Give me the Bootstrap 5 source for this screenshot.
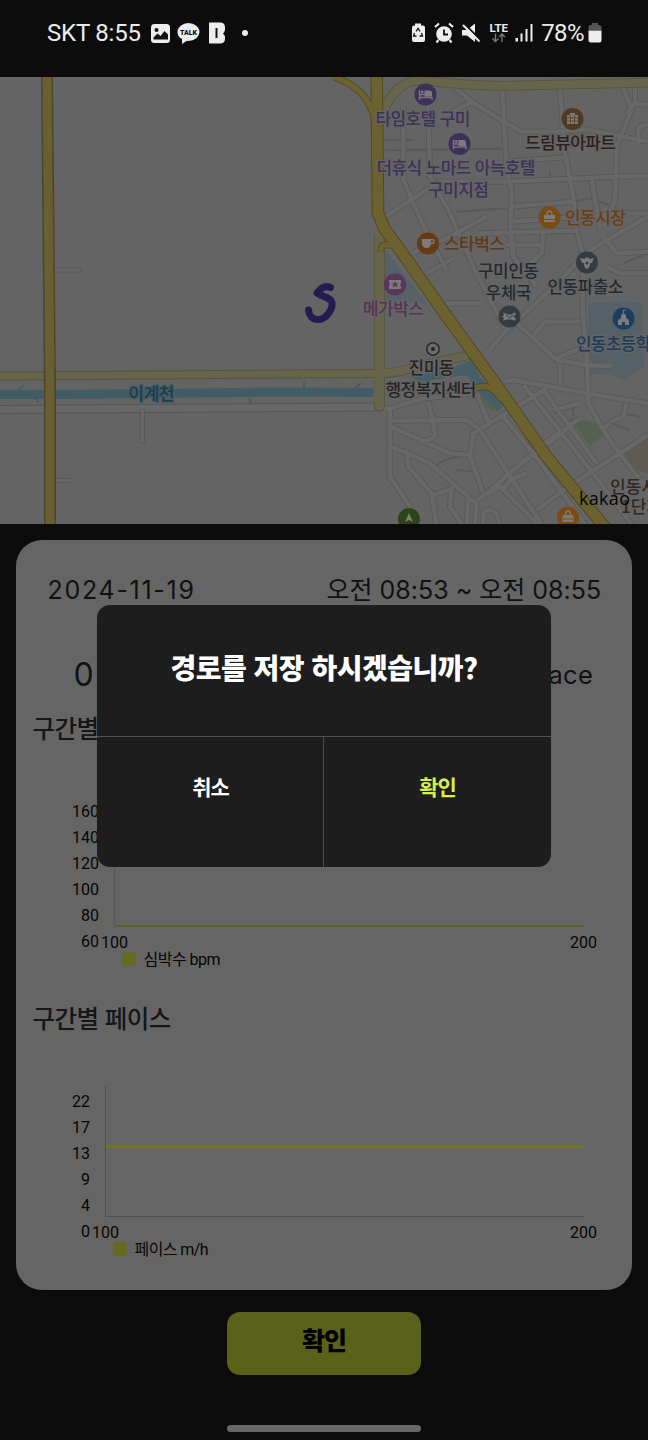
<!DOCTYPE html>
<html lang="ko">
<head>
<meta charset="utf-8">
<meta name="viewport" content="width=device-width, initial-scale=1">
<title>경로 저장</title>
<link rel="stylesheet" href="https://cdn.jsdelivr.net/npm/bootstrap@5.3.0/dist/css/bootstrap.min.css">
<style>
  body { background:#0c0c0c; font-family:"Noto Sans CJK KR",sans-serif; color:#111; }
  .screen { width:648px; height:1440px; }
  .statusbar { height:77px; padding:0 46px 11px 47px; color:#ededed; font:24px/1 Roboto,sans-serif; }
  .statusbar svg { display:block; flex:none; }
  .carrier { width:95px; letter-spacing:-.2px; white-space:nowrap; }
  .charge { letter-spacing:-.6px; }
  .mapview { height:447px; }
  .mapview svg, .plot { display:block; }
  .record { width:616.5px; height:750px; margin:15.5px 0 0 15.6px; background:#656565; border-radius:26px; }
  .when { height:50px; margin:25px 31px 0 32px; font:25px/50px Inter,"Noto Sans CJK KR",sans-serif; }
  .date-text { letter-spacing:1.7px; }
  .time-text { letter-spacing:0; }
  .stats { height:60px; margin:30px 39px 0 58px; line-height:60px; font-family:Inter,sans-serif; }
  .stat-num { font-size:32px; } .stat-unit { font-size:25.5px; letter-spacing:.3px; }
  .section-title { font-size:24.5px; line-height:40px; height:40px; padding-top:3px; padding-left:17px; color:#141618; letter-spacing:-.55px; font-weight:500; }
  .section-title.mt-2 { padding-top:5px; }
  .btn-save, .btn-save:hover { width:194px; height:63px; margin-top:22px; background:#5a611a; color:#000; border:0; border-radius:13px; font-size:25px; font-weight:900; line-height:1; padding:0 0 8px; letter-spacing:-1px; }
  .home-handle { width:194px; height:7px; margin-top:50px; border-radius:4px; background:#666; }
  .ask { left:97px; top:605px; width:454px; height:262px; border-radius:13px; background:#1d1d1d; overflow:hidden; }
  .ask-title { height:132px; border-bottom:1.5px solid #555; color:#fff; font-weight:900; font-size:28px; line-height:124px; letter-spacing:-.5px; }
  .ask-btn, .ask-btn:hover { height:130px; border:0; border-radius:0; background:none; color:#fff; font-size:21px; font-weight:700; line-height:1; padding:0 0 31px; letter-spacing:-1px; }
  .ask-btn:first-child { box-shadow:inset -1px 0 #4a4a4a; }
  .ask-btn + .ask-btn { color:#d9ee4e; }
  .tick { font:16px Roboto,"Noto Sans CJK KR",sans-serif; fill:#050505; }
  .place { font:500 17px "Noto Sans CJK KR",sans-serif; paint-order:stroke; stroke:#656565; stroke-width:2.5px; stroke-linejoin:round; text-anchor:middle; }
</style>
</head>
<body>
<div class="screen position-relative overflow-hidden d-flex flex-column">
  <header class="statusbar d-flex justify-content-between align-items-center">
    <div class="d-flex align-items-center">
      <span class="carrier">SKT 8:55</span>
      <svg class="ms-2" width="102" height="24" viewBox="150 21 102 24" fill="#ededed">
        <rect x="151" y="24" width="19" height="19" rx="3.5"/>
        <circle cx="156.5" cy="30" r="2" fill="#111"/><path d="M153.500 39.500v-2l4-4 3 2.500 4-5 3.500 3.500v5z" fill="#111"/>
        <ellipse cx="188.500" cy="32" rx="11" ry="9"/><path d="M182 38v6l6-4z"/>
        <text x="188.500" y="35" font-family="Roboto" font-size="8" font-weight="900" fill="#111" text-anchor="middle" textLength="17" lengthAdjust="spacingAndGlyphs">TALK</text>
        <path d="M209 22.500h11q5 0 5 5v2q0 2-2 4 2 2 2 4v1q0 5-5 5h-11z"/><path d="M215.500 28h2v10h-2z" fill="#111"/>
        <circle cx="245" cy="33" r="3"/>
      </svg>
    </div>
    <div class="d-flex align-items-center">
      <svg width="131" height="24" viewBox="410 21 131 24" fill="#ededed">
        <path d="M415 23.500h6v2h2q2 0 2 2v12.500q0 2-2 2h-9q-2 0-2-2v-12.500q0-2 2-2h1z"/>
        <path d="M416 31.500l2-3 2 3M421.500 33l1 3h-3M416.500 36h-3l1-3" fill="none" stroke="#111" stroke-width="1.300"/>
        <circle cx="444" cy="34" r="7.800"/><path d="M435 27l4-3.500M453 27l-4-3.500M438.500 40l-2 2.500M449.500 40l2 2.500" stroke="#ededed" stroke-width="2.200"/><path d="M444 29.500v5h4" fill="none" stroke="#111" stroke-width="1.800"/>
        <path d="M462 30h5l8-6.500v18.500l-8-6.500h-5z"/><path d="M465 24.500l15 15" stroke="#0c0c0c" stroke-width="2"/><path d="M463 25l16.500 16.500" stroke="#ededed" stroke-width="2.200"/>
        <text x="489.500" y="32" font-family="Roboto" font-size="11" font-weight="700" textLength="18.500" lengthAdjust="spacingAndGlyphs">LTE</text>
        <path d="M495.500 33.500v8M492.500 38.500l3 3 3-3M502 42v-8M499 37l3-3 3 3" fill="none" stroke="#777" stroke-width="1.400"/>
        <path d="M515.500 38h2.500v3.500h-2.500zM520.500 33.500h2v8h-2zM525.500 29h2v12.500h-2zM530.500 24h2v17.500h-2z"/>
      </svg>
      <span class="charge">78%</span>
      <svg class="ms-1" width="14" height="20" viewBox="0 0 14 20"><path d="M4 0h6v2h1q2.500 0 2.500 2.500V7h-13V4.500Q.5 2 3 2h1z" fill="#555"/><path d="M.5 7.500h13V17q0 2.500-2.500 2.500H3Q.5 19.500.5 17z" fill="#ededed"/></svg>
    </div>
  </header>

  <section class="mapview">
    <svg width="648" height="447" viewBox="0 77 648 447">
      <defs>
        <path id="lanes" d="M330 40L395 95L500 160L545 185L650 185L740 178L924 215M395 95L320 135M487 60L500 300L515 360L512 480L520 560L590 650M660 60L675 250L700 380L712 490L730 560L728 720L740 860L745 1000L790 1080L830 1140L924 1260M850 55L875 120L830 230L825 390L790 470M885 50V100L924 105M885 100L860 130M895 225V185Q895 165 924 165M265 110L270 320L330 430L400 590L495 775M190 110V330L260 490L320 600M135 440L260 360L300 335L500 335L830 320L924 318M500 275L670 262M515 410L700 395M515 455L860 430L924 430M420 490L710 482M755 330L780 475M215 550L330 500L440 440M260 610L340 565M440 850L495 785L620 670L750 540L924 440M610 490L605 550L560 590M500 525H610M790 500L830 550L924 545M800 590L840 610H924M318 700H420M510 740L650 870L740 885L815 888M580 795L615 755H720M650 865L720 835M660 885L662 940M490 935L520 930L740 970L924 1000M-700 1013L0 1010L150 1015L250 985L410 970M150 1020V1220L210 1310M155 1052L380 1050L420 1080L550 1280L610 1370M265 995L278 1050L285 1095Q275 1115 240 1115M155 1070L330 1150L395 1155M155 1130L270 1180L385 1280L380 1370M200 1140L205 1190L275 1270L290 1370M620 955L400 1090L390 1160L430 1270M550 945L610 1020L790 1250L880 1370M610 960L770 1180M490 1040L580 1150L690 1300L740 1370M440 1270L600 1130L720 1045M520 1200L690 1070M590 1320L700 1240L924 1095M410 1290L480 1250L600 1370M490 1260L510 1230L560 1210M405 1370L410 1300L380 1280M335 1250L330 1310L370 1370M280 1275L340 1255M430 1370V1330Q445 1310 470 1330L480 1370M410 970L445 1055M790 1075L812 1060M640 1020L720 1000M860 1000L850 1040L810 1055"/>
        <g id="bed"><path d="M-6 -4.500V5.500M-6 3H6.500V5.500M-6 0H6" fill="none" stroke="#77737f" stroke-width="1.500"/><circle cx="-3.300" cy="-2.500" r="1.400"/><path d="M-1-4h5q2.500 0 2.500 2.500V2H-1z"/></g>
      </defs>
      <rect y="77" width="648" height="447" fill="#646464"/>
      <g transform="translate(340 70) scale(.33333)" fill="none" stroke-linejoin="round">
        <path d="M135 540L260 700L135 690z" fill="#566067"/>
        <path d="M745 700L860 695L905 700L912 890L850 930L800 910L745 915z" fill="#566067"/>
        <path d="M685 1040L765 1060L790 1095L750 1128z" fill="#53604e"/>
        <path d="M850 1145L924 1090V1210L885 1200z" fill="#5e5953"/>
        <path d="M210 920L345 890L395 870L420 920L495 1005L470 1025L410 960L380 915L240 935z" fill="#465e68"/>
        <path d="M400 965L465 1022" stroke="#59624c" stroke-width="14"/>
        <path d="M130 210H220M135 241L490 236M350 425L500 415M700 395L750 385L820 410M290 1185Q320 1160 370 1160M345 1200L405 1205M700 1010V1040M815 1060L870 1080M850 1030L900 1040M630 305V320M850 580L924 550" stroke="#595959" stroke-width="6"/>
        <use href="#lanes" stroke="#585858" stroke-width="18"/>
        <use href="#lanes" stroke="#686868" stroke-width="13"/>
        <path d="M118 500V1008" stroke="#56543b" stroke-width="33" stroke-linecap="round"/>
        <path d="M130 125C155 65 190 25 260 32Q420 52 560 46L924 38M130 911Q190 905 240 888L410 850" stroke="#56543b" stroke-width="29"/>
        <path d="M118 480V1008" stroke="#67654b" stroke-width="28" stroke-linecap="round"/>
        <path d="M130 125C155 65 190 25 260 32Q420 52 560 46L924 38M120 911Q190 905 240 888L410 850" stroke="#67654b" stroke-width="24"/>
      </g>
      <g fill="none">
        <path d="M0 409.500L374 407" stroke="#555" stroke-width="9"/><path d="M0 409.500L374 407" stroke="#686868" stroke-width="7"/>
        <path d="M142.500 411V441M53 480.500H70M52 270H79" stroke="#595959" stroke-width="5" stroke-linecap="round"/><path d="M142.500 410V441M53 480.500H70M52 270H79" stroke="#686868" stroke-width="3" stroke-linecap="round"/>
        <path d="M0 376L378 373.500" stroke="#55543f" stroke-width="9"/><path d="M0 376L378 373.500" stroke="#67654b" stroke-width="7"/>
        <path d="M0 394.500H65L273 392L373 392.500" stroke="#425c65" stroke-width="9"/>
        <path d="M18 390l6-5M354 390l7-7M35 398l4 5M250 398v5M304 382v6" stroke="#425c65" stroke-width="1.800"/>
        <path d="M47 77L50 390V524" stroke="#4e4727" stroke-width="12"/><path d="M47 77L50 390V524" stroke="#695f34" stroke-width="9"/>
        <path d="M379 366V402" stroke="#67654b" stroke-width="9"/>
      </g>
      <g transform="translate(340 70) scale(.33333)" fill="none" stroke-linejoin="round">
        <path d="M110 20L114 430L133 475L205 575L310 725L480 960L620 1160L800 1378" stroke="#50491f" stroke-width="38"/>
        <path d="M-20 20C55 45 94 90 105 155M122 545Q122 522 140 525H180M405 955Q455 935 485 990" stroke="#50491f" stroke-width="21"/>
        <path d="M-20 20C55 45 94 90 105 155M122 545Q122 522 140 525H180M405 955Q455 935 485 990" stroke="#6b622f" stroke-width="16"/>
        <path d="M110 20L114 430L133 475L205 575L310 725L480 960L620 1160L800 1378" stroke="#6b622f" stroke-width="32"/>
      </g>
      <path d="M330.500 287.500C325 285 320 289 317 293C322 297 331 297 332 303C333 309 326 319 319 319.500C312 320 309 315 308.500 310" fill="none" stroke="#261b50" stroke-width="7" stroke-linecap="round" stroke-linejoin="round"/>

      <g fill="#7b7b7b">
        <circle cx="425.500" cy="94.500" r="11" fill="#3b3159"/><use href="#bed" x="425.500" y="94.500"/>
        <circle cx="459.500" cy="144" r="11" fill="#3b3159"/><use href="#bed" x="459.500" y="144"/>
        <circle cx="572.500" cy="119" r="11" fill="#4e3b22"/><path d="M567 115h3v-2h5v2h3v9h-11z"/><path d="M567 118h11M567 121h11M570.500 115v9M574.500 115v9" stroke="#4e3b22" stroke-width=".7"/>
        <circle cx="549.500" cy="217.500" r="11" fill="#7a4b13"/><path d="M544 215h11v7h-11z"/><path d="M547 215q0-4 2.500-4t2.500 4" fill="none" stroke="#7b7b7b" stroke-width="1.500"/><path d="M544 219.500h11" stroke="#7a4b13"/>
        <circle cx="428" cy="243.500" r="11" fill="#673b13"/><path d="M422 239h9v4q0 5-4.500 5t-4.500-5z"/><circle cx="432" cy="241.500" r="2" fill="none" stroke="#7b7b7b" stroke-width="1.300"/>
        <circle cx="395" cy="284.500" r="11" fill="#59365d"/><path d="M389 280h12v3q-2 2 0 3v3h-12v-3q2-2 0-3z"/><path d="M395 281l1 2.500h2.500l-2 1.500 1 2.500-2.500-1.500-2.500 1.500 1-2.500-2-1.500h2.500z" fill="#59365d"/>
        <circle cx="587" cy="262.500" r="11" fill="#343b42"/><path d="M580 258l4 1 3-2 3 2 4-1-2 5h-2q0 5-3 6-3-1-3-6h-2z"/><circle cx="587" cy="263" r="1.500" fill="#343b42"/>
        <circle cx="509.500" cy="316.500" r="11" fill="#343b42"/><path d="M503 312.500l5 2h3l4-2 1 2-3 2 3 2-1 2-4-1h-3l-5 1 1-2.500-2-1.500 2-1.500z"/><path d="M506 315l3.500 3 3.500-3" fill="none" stroke="#343b42"/>
        <circle cx="623.500" cy="318.500" r="11" fill="#1d3e61"/><path d="M618 325v-5l3-2v-3l2.500-2 2.500 2v3l3 2v5h-4v-3h-3v3z"/><path d="M623.500 313v-3h2" stroke="#7b7b7b" fill="none"/>
        <circle cx="433" cy="349" r="6.200" fill="#6c6c6c" stroke="#282828" stroke-width="1.500"/><circle cx="433" cy="349" r="2" fill="#252525"/>
        <circle cx="409" cy="519" r="11" fill="#2c4419"/><path d="M409 513l4 9-4-2-4 2z"/>
        <circle cx="568" cy="517.500" r="11" fill="#7a4b13"/><path d="M562.500 515h11v7h-11z"/><path d="M565.500 515q0-4 2.500-4t2.500 4" fill="none" stroke="#7b7b7b" stroke-width="1.500"/><path d="M562.500 519h11" stroke="#7a4b13"/>
      </g>
      <g class="place">
        <g fill="#3b3159"><text x="423" y="125" textLength="95">타임호텔 구미</text><text x="456" y="174" textLength="159">더휴식 노마드 아늑호텔</text><text x="458.500" y="195.500" textLength="61">구미지점</text></g>
        <text x="570.500" y="149" textLength="91" fill="#2a211d">드림뷰아파트</text>
        <text x="595.500" y="224" textLength="61" fill="#6d3d11">인동시장</text>
        <text x="474.500" y="250" textLength="61" fill="#633711">스타벅스</text>
        <g fill="#252a2e"><text x="508.500" y="277" textLength="61">구미인동</text><text x="508.500" y="298.500" textLength="46">우체국</text><text x="585.500" y="292.500" textLength="76">인동파출소</text></g>
        <text x="393.500" y="315" textLength="61" fill="#573158">메가박스</text>
        <text x="621" y="349.500" textLength="90" fill="#1c3a59">인동초등학교</text>
        <text x="431.500" y="374" textLength="46" fill="#242424">진미동</text><text x="431" y="395.500" textLength="91" fill="#242424">행정복지센터</text>
        <text x="151.500" y="399.500" textLength="46" fill="#193b49" style="stroke:#425c65">이계천</text>
        <g fill="#302622" style="text-anchor:start"><text x="610" y="493">인동시장</text><text x="621" y="513">1단지</text></g>
      </g>
      <text x="579" y="504.500" font-family="Open Sans" font-size="18" textLength="51" fill="#030303">kakao</text>
    </svg>
  </section>

  <main class="d-flex flex-column">
    <section class="record overflow-hidden d-flex flex-column">
      <div class="when d-flex justify-content-between text-nowrap"><span class="date-text">2024-11-19</span><span class="time-text">오전 08:53 ~ 오전 08:55</span></div>
      <div class="stats d-flex justify-content-between"><span class="stat-num">0</span><span class="stat-unit">Pace</span></div>
      <div class="section-title">구간별 심박수</div>
      <svg class="plot" width="617" height="240" viewBox="16 745 617 240">
        <path d="M114.500 797V926" stroke="#555"/><path d="M114 926H584" stroke="#5b6124" stroke-width="2"/>
        <g class="tick"><g text-anchor="end"><text x="99" y="817">160</text><text x="99" y="843">140</text><text x="99" y="869">120</text><text x="99" y="895">100</text><text x="99" y="921">80</text><text x="99" y="947">60</text></g><text x="101" y="947.500">100</text><text x="570" y="947.500">200</text><text x="143.500" y="965" textLength="77">심박수 bpm</text></g>
        <path d="M122.500 952.500h13v13h-13z" fill="#646c1b"/>
      </svg>
      <div class="section-title mt-2">구간별 페이스</div>
      <svg class="plot" width="617" height="250" viewBox="16 1033 617 250">
        <path d="M105.500 1086V1216.500H584" fill="none" stroke="#505050"/><path d="M106 1146.500H584" stroke="#6e761f" stroke-width="3"/>
        <g class="tick"><g text-anchor="end"><text x="90" y="1107">22</text><text x="90" y="1133">17</text><text x="90" y="1159">13</text><text x="90" y="1185">9</text><text x="90" y="1211">4</text><text x="90" y="1237">0</text></g><text x="92" y="1237.500">100</text><text x="570" y="1237.500">200</text><text x="134.500" y="1255" textLength="74">페이스 m/h</text></g>
        <path d="M113.500 1242.500h13v13h-13z" fill="#646c1b"/>
      </svg>
    </section>
    <button class="btn btn-save mx-auto">확인</button>
    <div class="home-handle mx-auto"></div>
  </main>

  <div class="ask position-absolute" role="dialog">
    <div class="ask-title text-center text-nowrap">경로를 저장 하시겠습니까?</div>
    <div class="d-flex"><button class="btn ask-btn w-50">취소</button><button class="btn ask-btn w-50">확인</button></div>
  </div>
</div>
<script src="https://cdn.jsdelivr.net/npm/bootstrap@5.3.0/dist/js/bootstrap.bundle.min.js"></script>
</body>
</html>
